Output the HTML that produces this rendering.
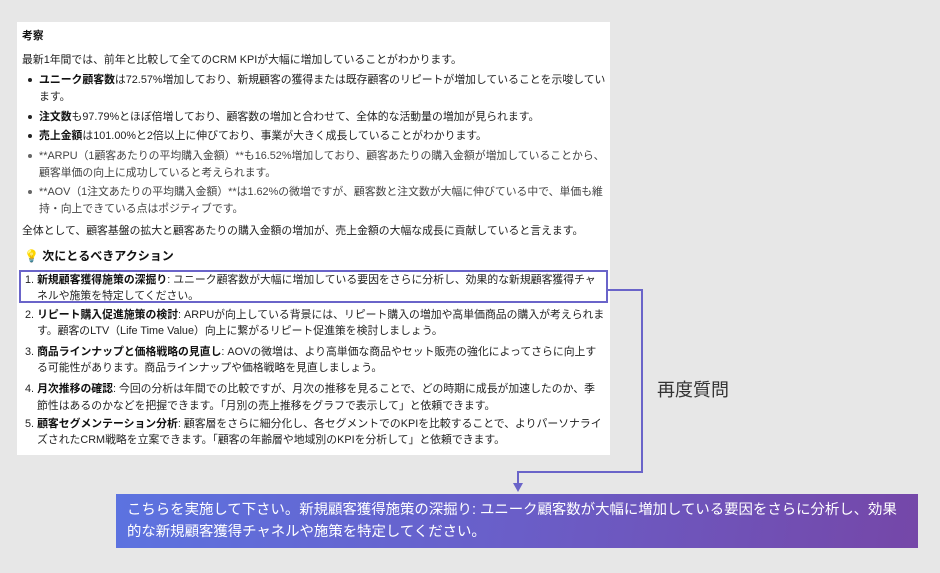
<!DOCTYPE html>
<html><head><meta charset="utf-8"><style>
*{margin:0;padding:0;box-sizing:border-box}
body{width:940px;height:573px;background:#e7e7e7;position:relative;overflow:hidden;font-family:"Liberation Sans","Noto Sans CJK JP",sans-serif;color:#222}
.panel{position:absolute;left:17px;top:22px;width:593px;height:433px;background:#fff}
.l{position:absolute;font-size:10.85px;white-space:nowrap;line-height:14px}
b{font-weight:700;color:#111}
.dot{position:absolute;width:4px;height:4px;border-radius:50%;background:#222}
.g{color:#444}
</style></head><body>
<div class="panel"></div>
<div class="l" style="left:22px;top:29px"><b>考察</b></div>
<div class="l" style="left:22px;top:53px">最新1年間では、前年と比較して全てのCRM KPIが大幅に増加していることがわかります。</div>
<div class="dot" style="left:28px;top:78px"></div>
<div class="l" style="left:39px;top:73px"><b>ユニーク顧客数</b>は72.57%増加しており、新規顧客の獲得または既存顧客のリピートが増加していることを示唆してい</div>
<div class="l" style="left:39px;top:90px">ます。</div>
<div class="dot" style="left:28px;top:115px"></div>
<div class="l" style="left:39px;top:110px"><b>注文数</b>も97.79%とほぼ倍増しており、顧客数の増加と合わせて、全体的な活動量の増加が見られます。</div>
<div class="dot" style="left:28px;top:134px"></div>
<div class="l" style="left:39px;top:129px"><b>売上金額</b>は101.00%と2倍以上に伸びており、事業が大きく成長していることがわかります。</div>
<div class="dot" style="left:28px;top:154px;background:#666"></div>
<div class="l g" style="left:39px;top:149px">**ARPU（1顧客あたりの平均購入金額）**も16.52%増加しており、顧客あたりの購入金額が増加していることから、</div>
<div class="l g" style="left:39px;top:166px">顧客単価の向上に成功していると考えられます。</div>
<div class="dot" style="left:28px;top:190px;background:#666"></div>
<div class="l g" style="left:39px;top:185px">**AOV（1注文あたりの平均購入金額）**は1.62%の微増ですが、顧客数と注文数が大幅に伸びている中で、単価も維</div>
<div class="l g" style="left:39px;top:202px">持・向上できている点はポジティブです。</div>
<div class="l" style="left:22px;top:224px">全体として、顧客基盤の拡大と顧客あたりの購入金額の増加が、売上金額の大幅な成長に貢献していると言えます。</div>
<div class="l" style="left:24px;top:249px;font-size:12px"><span style="color:#f0b400">💡</span> <b>次にとるべきアクション</b></div>
<div style="position:absolute;left:19px;top:270px;width:589px;height:33px;border:2px solid #6a64c9"></div>
<div class="l" style="left:25px;top:273px">1. <b>新規顧客獲得施策の深掘り</b>: ユニーク顧客数が大幅に増加している要因をさらに分析し、効果的な新規顧客獲得チャ</div>
<div class="l" style="left:37px;top:289px">ネルや施策を特定してください。</div>
<div class="l" style="left:25px;top:308px">2. <b>リピート購入促進施策の検討</b>: ARPUが向上している背景には、リピート購入の増加や高単価商品の購入が考えられま</div>
<div class="l" style="left:37px;top:324px">す。顧客のLTV（Life Time Value）向上に繋がるリピート促進策を検討しましょう。</div>
<div class="l" style="left:25px;top:345px">3. <b>商品ラインナップと価格戦略の見直し</b>: AOVの微増は、より高単価な商品やセット販売の強化によってさらに向上す</div>
<div class="l" style="left:37px;top:361px">る可能性があります。商品ラインナップや価格戦略を見直しましょう。</div>
<div class="l" style="left:25px;top:382px">4. <b>月次推移の確認</b>: 今回の分析は年間での比較ですが、月次の推移を見ることで、どの時期に成長が加速したのか、季</div>
<div class="l" style="left:37px;top:399px">節性はあるのかなどを把握できます。「月別の売上推移をグラフで表示して」と依頼できます。</div>
<div class="l" style="left:25px;top:417px">5. <b>顧客セグメンテーション分析</b>: 顧客層をさらに細分化し、各セグメントでのKPIを比較することで、よりパーソナライ</div>
<div class="l" style="left:37px;top:433px">ズされたCRM戦略を立案できます。「顧客の年齢層や地域別のKPIを分析して」と依頼できます。</div>
<svg style="position:absolute;left:0;top:0" width="940" height="573">
<polyline points="608,290 642,290 642,472 518,472 518,484" fill="none" stroke="#6a64c9" stroke-width="2"/>
<polygon points="513,483 523,483 518,492" fill="#6a64c9"/>
</svg>
<div class="l" style="left:657px;top:379px;font-size:18px;line-height:22px;color:#333">再度質問</div>
<div style="position:absolute;left:116px;top:494px;width:802px;height:54px;background:linear-gradient(100deg,#5c73e0 0%,#6a5ec8 50%,#7547a8 100%)"></div>
<div class="l" style="left:127px;top:499px;font-size:14.4px;line-height:22px;color:#fff">こちらを実施して下さい。新規顧客獲得施策の深掘り: ユニーク顧客数が大幅に増加している要因をさらに分析し、効果<br>的な新規顧客獲得チャネルや施策を特定してください。</div>
</body></html>
